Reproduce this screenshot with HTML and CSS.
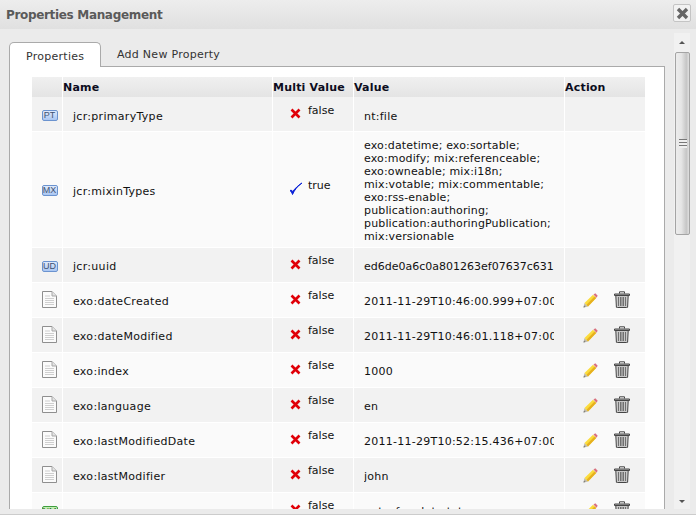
FILE: index.html
```html
<!DOCTYPE html>
<html>
  <head>
    <title>Properties Management</title>
    <link rel="stylesheet" href="styles.css">
  </head>
  <body>
    <svg class="defs" width="0" height="0">
      <symbol id="i-false" viewBox="0 0 11 11">
        <path d="M1.500 1.500l8 8M9.500 1.500l-8 8" stroke="#e00008" stroke-width="2.600" fill="none"/>
      </symbol>
      <symbol id="i-true" viewBox="0 0 14 14">
        <path d="M1 8.500c1 .8 1.800 1.800 2.500 4C5.500 8 8.500 4 13 1 9 3.500 6 6.500 3.800 9.500 3.300 8.600 2.300 8 1 8.500z" fill="#0a22d8" stroke="#0a22d8" stroke-width="1"/>
      </symbol>
      <symbol id="i-file" viewBox="0 0 15 17">
        <path d="M.5.5h9.500l4.500 4.500v11.500H.5z" fill="#fbfbfb" stroke="#8f8f8f"/>
        <path d="M10 .5v4.500h4.500" fill="#e4e4e4" stroke="#a8a8a8"/>
        <path d="M3 5h5M3 7.500h9M3 9.500h9M3 11.500h9M3 13.500h9" stroke="#cfcfcf" fill="none"/>
      </symbol>
      <symbol id="i-edit" viewBox="0 0 15 15">
        <path d="M.5 14.500l1-4.500 3.500 3.500z" fill="#bdb9ac"/>
        <path d="M.5 14.500l.5-2 1.500 1.500z" fill="#777"/>
        <path d="M1.500 10L10 1.800l3.200 3.200L5 13.500z" fill="#fbdc3c"/>
        <path d="M3.500 11.800L11.500 3.500l1.700 1.500L5 13.500z" fill="#e6b020"/>
        <path d="M10.500 1.500l1.800-1.200 2.400 2.400-1.300 2z" fill="#d9707e"/>
      </symbol>
      <symbol id="i-trash" viewBox="0 0 16 17">
        <path d="M.5 3h15v1.500H.5z" fill="#b5b5b5" stroke="#444"/>
        <path d="M5.500 2.500V.8h5v1.700" fill="none" stroke="#444"/>
        <path d="M1.800 4.500h12.400l-.6 11.800-1 .2H3.400l-1-.2z" fill="#c8c8c8" stroke="#444"/>
        <path d="M4.500 6v9M6.500 6v9M8 6v9M9.500 6v9M11.500 6v9" stroke="#707070" fill="none"/>
      </symbol>
    </svg>

    <div class="dialog">
      <div class="title-bar">
        <h1>Properties Management</h1>
        <button class="close" aria-label="Close">
          <svg width="13" height="13" viewBox="0 0 13 13"><path d="M2 2l9 9M11 2l-9 9" stroke="#666" stroke-width="3.400" fill="none"/></svg>
        </button>
      </div>

      <div class="body">
        <div class="content">
          <div class="tabs">
            <div class="tab active">Properties</div>
            <div class="tab">Add New Property</div>
          </div>
          <div class="panel">
            <table class="props">
              <colgroup>
                <col class="c-icon"><col class="c-name"><col class="c-multi"><col class="c-value"><col class="c-action">
              </colgroup>
              <thead>
                <tr><th></th><th>Name</th><th>Multi Value</th><th>Value</th><th>Action</th></tr>
              </thead>
              <tbody>
                <tr class="odd top">
                  <td class="ic"><span class="badge">PT</span></td>
                  <td class="name">jcr:primaryType</td>
                  <td class="multi"><svg class="mark"><use href="#i-false"/></svg><span>false</span></td>
                  <td class="val"><div>nt:file</div></td>
                  <td></td>
                </tr>
                <tr class="top">
                  <td class="ic"><span class="badge">MX</span></td>
                  <td class="name">jcr:mixinTypes</td>
                  <td class="multi"><svg class="mark tick"><use href="#i-true"/></svg><span>true</span></td>
                  <td class="val wrap"><div>exo:datetime; exo:sortable; exo:modify; mix:referenceable; exo:owneable; mix:i18n; mix:votable; mix:commentable; exo:rss-enable; publication:authoring; publication:authoringPublication; mix:versionable</div></td>
                  <td></td>
                </tr>
                <tr class="odd">
                  <td class="ic"><span class="badge">UD</span></td>
                  <td class="name">jcr:uuid</td>
                  <td class="multi"><svg class="mark"><use href="#i-false"/></svg><span>false</span></td>
                  <td class="val uuid"><div>ed6de0a6c0a801263ef07637c631</div></td>
                  <td></td>
                </tr>
                <tr>
                  <td class="ic"><svg class="file"><use href="#i-file"/></svg></td>
                  <td class="name">exo:dateCreated</td>
                  <td class="multi"><svg class="mark"><use href="#i-false"/></svg><span>false</span></td>
                  <td class="val"><div>2011-11-29T10:46:00.999+07:00</div></td>
                  <td class="act"><svg class="pen"><use href="#i-edit"/></svg><svg class="bin"><use href="#i-trash"/></svg></td>
                </tr>
                <tr class="odd">
                  <td class="ic"><svg class="file"><use href="#i-file"/></svg></td>
                  <td class="name">exo:dateModified</td>
                  <td class="multi"><svg class="mark"><use href="#i-false"/></svg><span>false</span></td>
                  <td class="val"><div>2011-11-29T10:46:01.118+07:00</div></td>
                  <td class="act"><svg class="pen"><use href="#i-edit"/></svg><svg class="bin"><use href="#i-trash"/></svg></td>
                </tr>
                <tr>
                  <td class="ic"><svg class="file"><use href="#i-file"/></svg></td>
                  <td class="name">exo:index</td>
                  <td class="multi"><svg class="mark"><use href="#i-false"/></svg><span>false</span></td>
                  <td class="val"><div>1000</div></td>
                  <td class="act"><svg class="pen"><use href="#i-edit"/></svg><svg class="bin"><use href="#i-trash"/></svg></td>
                </tr>
                <tr class="odd">
                  <td class="ic"><svg class="file"><use href="#i-file"/></svg></td>
                  <td class="name">exo:language</td>
                  <td class="multi"><svg class="mark"><use href="#i-false"/></svg><span>false</span></td>
                  <td class="val"><div>en</div></td>
                  <td class="act"><svg class="pen"><use href="#i-edit"/></svg><svg class="bin"><use href="#i-trash"/></svg></td>
                </tr>
                <tr>
                  <td class="ic"><svg class="file"><use href="#i-file"/></svg></td>
                  <td class="name">exo:lastModifiedDate</td>
                  <td class="multi"><svg class="mark"><use href="#i-false"/></svg><span>false</span></td>
                  <td class="val"><div>2011-11-29T10:52:15.436+07:00</div></td>
                  <td class="act"><svg class="pen"><use href="#i-edit"/></svg><svg class="bin"><use href="#i-trash"/></svg></td>
                </tr>
                <tr class="odd">
                  <td class="ic"><svg class="file"><use href="#i-file"/></svg></td>
                  <td class="name">exo:lastModifier</td>
                  <td class="multi"><svg class="mark"><use href="#i-false"/></svg><span>false</span></td>
                  <td class="val"><div>john</div></td>
                  <td class="act"><svg class="pen"><use href="#i-edit"/></svg><svg class="bin"><use href="#i-trash"/></svg></td>
                </tr>
                <tr>
                  <td class="ic"><span class="badge green">NM</span></td>
                  <td class="name">exo:name</td>
                  <td class="multi"><svg class="mark"><use href="#i-false"/></svg><span>false</span></td>
                  <td class="val"><div>note_for_date.txt</div></td>
                  <td class="act"><svg class="pen"><use href="#i-edit"/></svg><svg class="bin"><use href="#i-trash"/></svg></td>
                </tr>
              </tbody>
            </table>
          </div>
        </div>

        <div class="scrollbar">
          <div class="arrow up"></div>
          <div class="thumb"><div class="grip"></div></div>
          <div class="arrow down"></div>
        </div>
      </div>
      <div class="foot"></div>
    </div>
  </body>
</html>
```

FILE: styles.css
```css
* {box-sizing: border-box;}

html, body {
  height: 100%;
}

body {
  margin: 0;
  overflow: hidden;
  background-color: #ebebeb;
  color: #111;
  font-family: "DejaVu Sans", Verdana, sans-serif;
  font-size: 11px;
}

.defs {
  position: absolute;
}

.dialog {
  display: flex;
  flex-direction: column;
  height: 100%;
}

.title-bar {
  display: flex;
  align-items: center;
  justify-content: space-between;
  flex: none;
  height: 29px;
  padding: 0 5px 0 6px;
  background: linear-gradient(#ededed, #e0e0e0);
}

h1 {
  margin: 0;
  color: #5a5a5a;
  font-size: 12px;
  font-weight: bold;
  letter-spacing: -0.33px;
}

.close {
  display: flex;
  align-items: center;
  justify-content: center;
  width: 18px;
  height: 18px;
  padding: 0;
  margin-top: -3px;
  background: #f2f2f2;
  border: 1px solid #c4c4c4;
  border-radius: 2px;
}

.body {
  display: flex;
  flex: 1;
  min-height: 0;
  padding-top: 4px;
  background-color: #ebebeb;
}

.content {
  flex: 1;
  min-width: 0;
  padding: 9px 9px 0 9px;
  overflow: hidden;
}

.tabs {
  display: flex;
  height: 25px;
  position: relative;
  z-index: 1;
}

.tab {
  height: 24px;
  padding: 6px 16px 0;
  color: #333;
  letter-spacing: 0.27px;
}

.tab.active {
  width: 92px;
  height: 25px;
  padding-top: 7px;
  background-color: #fff;
  border: 1px solid #aaa;
  border-bottom: 0;
  border-radius: 5px 5px 0 0;
}

.panel {
  margin-top: -1px;
  padding: 10px 19px 0 22px;
  background-color: #fff;
  border: 1px solid #aaa;
  border-bottom: 0;
}

.props {
  width: 613px;
  border-collapse: separate;
  border-spacing: 0;
  table-layout: fixed;
}

.c-icon {width: 31px;}
.c-name {width: 210px;}
.c-multi {width: 81px;}
.c-value {width: 211px;}
.c-action {width: 80px;}

.props th {
  height: 20px;
  padding: 1px 0 0 0;
  background: linear-gradient(#f0f0f0, #e4e4e4);
  border-right: 1px solid #fff;
  color: #0c0c20;
  font-size: 11px;
  font-weight: bold;
  letter-spacing: 0.2px;
  text-align: left;
}

.props th:last-child,
.props td:last-child {
  border-right: 0;
}

.props td {
  height: 35px;
  padding: 0;
  background-color: #fafafa;
  border-right: 1px solid #fff;
  border-bottom: 1px solid #fff;
  vertical-align: middle;
}

.props tr.odd td {
  background-color: #f2f2f2;
}

.props td.ic {
  padding-left: 5px;
  text-align: center;
  line-height: 0;
}

.badge {
  display: inline-block;
  width: 16px;
  height: 11px;
  margin-top: 2px;
  background: linear-gradient(#dfeafc, #a9c6f2);
  border: 1px solid #6b93cf;
  border-radius: 2px;
  color: #3f5272;
  font-family: "Liberation Sans", sans-serif;
  font-size: 9px;
  line-height: 9px;
  text-align: center;
}

.badge.green {
  background: linear-gradient(#c8f0b8, #7fd870);
  border-color: #3f9f3f;
  color: #2a6a2a;
}

.file {
  width: 15px;
  height: 17px;
  margin-bottom: 2px;
}

.props td.name {
  padding: 2px 0 0 10px;
  letter-spacing: 0.3px;
}

.props td.multi {
  padding: 0 0 2px 17px;
  white-space: nowrap;
}

.multi span {
  position: relative;
  top: -4px;
  margin-left: 7px;
}

.mark {
  width: 11px;
  height: 11px;
  vertical-align: middle;
}

.mark.tick {
  width: 14px;
  height: 14px;
  margin-left: -1px;
  margin-right: -2px;
}

.props td.val {
  padding: 2px 0 0 10px;
  letter-spacing: 0.25px;
}

.val div {
  width: 190px;
  overflow: hidden;
  white-space: nowrap;
}

.props td.uuid {
  letter-spacing: 0;
}

/* first two rows sit a pixel lower than the rest */
.props tr.top td.name,
.props tr.top td.val {
  padding-top: 4px;
}

.props tr.top .multi span {
  top: -3px;
}

.props tr.top td.wrap {
  padding-top: 7px;
  padding-bottom: 4px;
  line-height: 13px;
  letter-spacing: 0.15px;
}

.val.wrap div {
  width: 196px;
  white-space: normal;
}

.props td.act {
  padding: 0 0 2px 18px;
  line-height: 0;
}

.pen {
  width: 15px;
  height: 15px;
  margin-right: 16px;
}

.bin {
  width: 16px;
  height: 17px;
}

.scrollbar {
  display: flex;
  flex: none;
  flex-direction: column;
  width: 16px;
  margin-right: 6px;
  background-color: #f1f1f1;
}

.arrow {
  flex: none;
  height: 19px;
  position: relative;
}

.arrow.down {
  height: 17px;
  margin-top: auto;
}

.arrow::after {
  content: "";
  position: absolute;
  left: 5px;
  top: 8px;
  border: 3px solid transparent;
}

.arrow.up::after {
  border-bottom: 3px solid #555;
  border-top: 0;
}

.arrow.down::after {
  border-top: 3px solid #555;
  border-bottom: 0;
}

.thumb {
  display: flex;
  align-items: center;
  justify-content: center;
  flex: none;
  height: 183px;
  margin: 0 0 0 1px;
  background: linear-gradient(to right, #ececec 0, #e6e6e6 40%, #c6c6c6 80%, #e0e0e0 100%);
  border: 1px solid #a4a4a4;
  border-radius: 2px;
}

.grip {
  width: 8px;
  height: 9px;
  background: repeating-linear-gradient(#777 0, #777 1px, #eee 1px, #eee 3px);
}

.foot {
  flex: none;
  height: 6px;
  background-color: #ebebeb;
  border-bottom: 1px solid #ccc;
}
```
